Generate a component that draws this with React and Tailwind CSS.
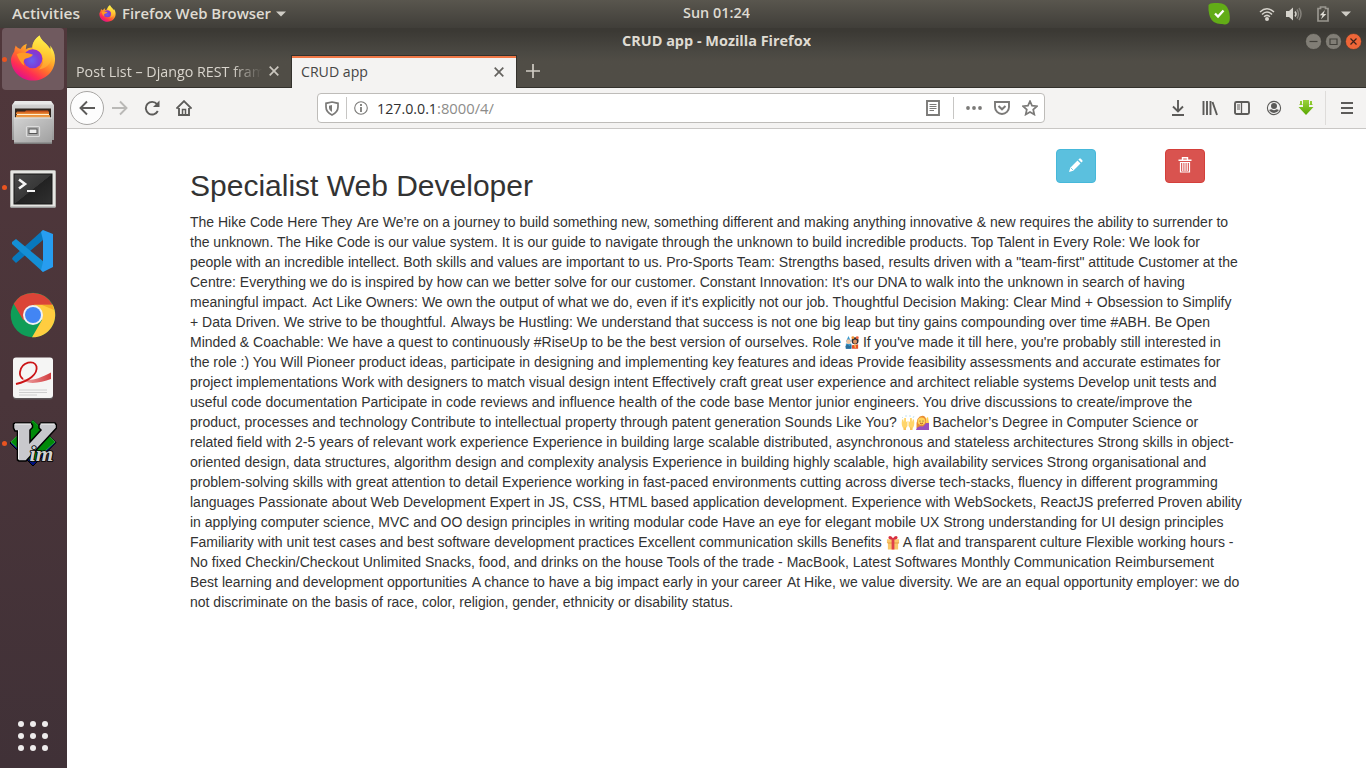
import React from "react";

function FirefoxLogo({ size, id }) {
  return (
    <svg width={size} height={size} viewBox="0 0 48 48" className="shrink-0">
      <defs>
        <linearGradient id={id + "a"} x1="0.8" y1="0.1" x2="0.25" y2="0.95">
          <stop offset="0.05" stopColor="#fff44f" />
          <stop offset="0.35" stopColor="#ffae2a" />
          <stop offset="0.6" stopColor="#ff6a2e" />
          <stop offset="0.8" stopColor="#ff2f52" />
          <stop offset="1" stopColor="#e0128a" />
        </linearGradient>
        <radialGradient id={id + "b"} cx="0.45" cy="0.6" r="0.6">
          <stop offset="0" stopColor="#6a60f0" />
          <stop offset="0.6" stopColor="#7a3fd8" />
          <stop offset="1" stopColor="#9530c8" />
        </radialGradient>
        <linearGradient id={id + "c"} x1="0.7" y1="0" x2="0.6" y2="1">
          <stop offset="0" stopColor="#fff44f" />
          <stop offset="0.5" stopColor="#ffcf35" />
          <stop offset="1" stopColor="#ff9a30" />
        </linearGradient>
      </defs>
      <path d="M6 11C5 13 4.600 15 4.500 17C2 21 1 24 1 26C1.500 38 11.500 47.500 24 47.500C37 47.500 47 38 47 25C47 19 45 15 42 11C42.500 13 42 15 42 15C39 9 32 6 31 0.500C26 4 23.500 8 23 13C20 13 18 14 16.500 15C16.500 13 17 11 17.500 9C14.500 10 12.500 12 11 14.500C9 14 7 13 6 11Z" fill={"url(#" + id + "a)"} />
      <path d="M31 0.500C26 4 22.500 9 24 15C30 15 34 19 34.500 25C35 30 33 33 30 36C37 35 42 31 43 25C43.500 20 42.500 16 42 15C39 9 32 6 31 0.500Z" fill={"url(#" + id + "c)"} />
      <circle cx="23.800" cy="24.800" r="10" fill={"url(#" + id + "b)"} />
      <path d="M7 20C12 17.500 19 18.500 24 20.500C22.500 23 19 23.500 16.500 24.500C13.500 26 14 29 15 32C11 29 9 25 7 20Z" fill="#ff9a25" />
    </svg>
  );
}

function FilesLogo() {
  return (
    <svg width="44" height="46" viewBox="0 0 44 46" className="-translate-y-px">
      <defs>
        <linearGradient id="cab" x1="0" y1="0" x2="0" y2="1">
          <stop offset="0" stopColor="#d8d8d8" />
          <stop offset="1" stopColor="#969696" />
        </linearGradient>
        <linearGradient id="drawer" x1="0" y1="0" x2="1" y2="1">
          <stop offset="0" stopColor="#d2d2d2" />
          <stop offset="1" stopColor="#a0a0a0" />
        </linearGradient>
      </defs>
      <path d="M4 2H40L43 6V41H1V6Z" fill="url(#cab)" />
      <path d="M4 2H40L42 5.500H2Z" fill="#e8e8e8" />
      <rect x="4" y="9.500" width="36" height="9.500" fill="#302620" />
      <path d="M6 12.500H14L15 11.500H37L38 13V19H5Z" fill="#c9561c" />
      <path d="M5 13.500H38V15H5Z" fill="#e98634" />
      <path d="M6 15H38V16.200H6Z" fill="#fff0d0" />
      <path d="M5 16.200H39V19H5Z" fill="#ef9a42" />
      <path d="M3 18.500H41V44H3Z" fill="url(#drawer)" />
      <path d="M3 18.500H41V19.500H3Z" fill="#e4e4e4" />
      <path d="M3 43.500H41V45H3Z" fill="#7c7c7c" />
      <rect x="15.500" y="27.500" width="13" height="10" rx="1" fill="#a8a8a8" stroke="#dcdcdc" strokeWidth="1.200" />
      <rect x="18" y="30" width="8" height="4.500" fill="#eee" stroke="#555" />
    </svg>
  );
}

function TerminalLogo() {
  return (
    <svg width="46" height="39" viewBox="0 0 46 39" className="translate-y-[2px]">
      <defs>
        <linearGradient id="scr" x1="0" y1="0" x2="1" y2="1">
          <stop offset="0" stopColor="#4a4a4a" />
          <stop offset="0.5" stopColor="#383838" />
          <stop offset="0.51" stopColor="#222" />
          <stop offset="1" stopColor="#303030" />
        </linearGradient>
      </defs>
      <rect x="0.500" y="0.500" width="45" height="37" rx="1" fill="#e6e6e3" stroke="#b4b4b0" />
      <path d="M1 36.500H45V38H1Z" fill="#999" />
      <rect x="4" y="4" width="38" height="30" fill="url(#scr)" stroke="#161616" />
      <path d="M9 9.500L15 14L9 18.500" fill="none" stroke="#f4f4f4" strokeWidth="2.600" />
      <path d="M17 21H25" stroke="#f4f4f4" strokeWidth="2" />
    </svg>
  );
}

function CodeLogo() {
  return (
    <svg width="44" height="44" viewBox="0 0 44 44">
      <path d="M1 30L5 34L32 11V1L2 28Z" fill="#0878bd" />
      <path d="M1 13L5 10L33 33L32 43L1 15Z" fill="#148fd4" />
      <path d="M32 1L42 5V38L32 43L30 41L32 33V11L30 3Z" fill="#279df0" />
    </svg>
  );
}

function ChromeLogo() {
  return (
    <svg width="46" height="46" viewBox="0 0 46 46">
      <circle cx="23" cy="23" r="22.300" fill="#0f9d58" />
      <path d="M3.700 11.800A22.300 22.300 0 0 1 42.700 13H23L13.400 28.500Z" fill="#db4437" />
      <path d="M42.700 12.800A22.300 22.300 0 0 1 22 45.300L32 28L24 12.800Z" fill="#ffcd40" />
      <path d="M32 13H42.700L44 18Z" fill="#f1ad25" />
      <circle cx="23" cy="23" r="10" fill="#f1f1f1" />
      <circle cx="23" cy="23" r="8" fill="#4285f4" />
    </svg>
  );
}

function EvinceLogo() {
  return (
    <svg width="42" height="43" viewBox="0 0 42 43" className="-translate-y-px">
      <defs>
        <linearGradient id="tail" x1="0" y1="0" x2="1" y2="0">
          <stop offset="0" stopColor="#f3b5b5" />
          <stop offset="1" stopColor="#d23c3e" />
        </linearGradient>
      </defs>
      <rect x="1" y="2" width="40" height="40.500" rx="3" fill="#5c5658" />
      <rect x="1" y="0.500" width="40" height="40.500" rx="3" fill="#f5f5f4" />
      <path d="M8 14C6 24 18 27 39 15.500V22C25 27.500 6 29 8 14Z" fill="url(#tail)" />
      <path d="M4 27C17 24 26 17 24.500 9.500C22.500 2 9.500 5 8 15C7.500 18 9 20.500 11 22" fill="none" stroke="#cb1416" strokeWidth="1.800" />
      <path d="M7 33H35M7 35.500H35M7 38H25" stroke="#cecece" strokeWidth="1" />
    </svg>
  );
}

function VimLogo() {
  return (
    <svg width="48" height="48" viewBox="0 0 48 48">
      <path d="M24 1L47 23.500L24 47L1 24Z" fill="#001080" stroke="#000" />
      <path d="M24 1.500L46 23L24 43L2 23Z" fill="#008a08" stroke="#36b53d" strokeWidth="0.800" />
      <path d="M6 4H22L23.500 6V8.500L21 11V23L32 11L30 9V6L32 4H46L47.500 6V9L17 42H10L8.500 41V12H6L4.500 9V5Z" fill="#c8c8cc" stroke="#000" strokeWidth="1.500" />
      <path d="M6 5H22M9.500 11V40M31.500 5H45.500" fill="none" stroke="#f3f3f3" />
      <text x="20.500" y="42" fontFamily="Liberation Serif, serif" fontSize="20" fontStyle="italic" fontWeight="bold" textLength="24" lengthAdjust="spacingAndGlyphs" fill="#d2d2d2" stroke="#000" strokeWidth="1.600" paintOrder="stroke">im</text>
    </svg>
  );
}

function Dock() {
  return (
    <aside className="flex w-[67px] shrink-0 flex-col justify-between bg-linear-to-b from-[#50373b] via-[#4a353a] to-[#403137]">
      <div className="flex flex-col gap-[2px]">
        <DockItem running active><span className="-translate-y-px"><FirefoxLogo size={46} id="fd" /></span></DockItem>
        <DockItem><FilesLogo /></DockItem>
        <DockItem running><TerminalLogo /></DockItem>
        <DockItem><CodeLogo /></DockItem>
        <DockItem><ChromeLogo /></DockItem>
        <DockItem><EvinceLogo /></DockItem>
        <DockItem running><VimLogo /></DockItem>
      </div>
      <div className="grid grid-cols-3 gap-[6px] pb-[17px] pl-[18px] pr-[19px]">
        {[0, 1, 2, 3, 4, 5, 6, 7, 8].map((i) => (
          <i key={i} className="size-[6px] rounded-full bg-[#eeecec]" />
        ))}
      </div>
    </aside>
  );
}

function DockItem({ running, active, children }) {
  return (
    <div className={"ml-[2px] flex h-[62px] w-[62px] items-center rounded " + (active ? "bg-[#705a5f]" : "")}>
      <i className={"size-[5px] shrink-0 rounded-full " + (running ? "bg-[#e95420]" : "")} />
      <span className="flex w-[52px] shrink-0 justify-center">{children}</span>
    </div>
  );
}

function Label({ width, size = 14, children, className = "", weight = 400, fill }) {
  return (
    <svg width={width} height="22" viewBox={"0 0 " + width + " 22"} className={"shrink-0 " + className}>
      <text x="0" y="16" fontFamily="Open Sans, Noto Sans, sans-serif" fontSize={size} fontWeight={weight} textLength={width} lengthAdjust="spacingAndGlyphs" fill={fill}>{children}</text>
    </svg>
  );
}

function TopBar() {
  return (
    <header className="flex h-7 shrink-0 items-center bg-linear-to-b from-[#59564e] to-[#403e39] pl-3">
      <Label width={68} size={13.5} weight={600} fill="#dfdbd2" className="-mt-[1px]">Activities</Label>
      <span className="ml-[19px] flex w-[19px] -translate-y-px"><FirefoxLogo size={17} id="ft" /></span>
      <Label width={149} size={13.5} weight={600} fill="#dfdbd2" className="ml-[4px] -mt-[1px]">Firefox Web Browser</Label>
      <svg width="10" height="6" className="ml-[5px] shrink-0"><path d="M0 0.500H10L5 5.500Z" fill="#cfccc5" /></svg>
      <Label width={67} size={13.5} weight={600} fill="#dfdbd2" className="ml-[397px] -mt-[2px]">Sun 01:24</Label>
      <svg width="22" height="23" viewBox="0 0 22 23" className="-mt-[2px] ml-[458px] shrink-0">
        <path d="M0.500 3Q2 0.500 8 1Q18 0 20.500 8Q22.500 13 21.500 19Q20 23.500 14 22Q5 22.500 2 15Q1 12 0.500 8Z" fill="#62ac17" />
        <path d="M7 11.500L10 14.500L15.500 8.500" fill="none" stroke="#fff" strokeWidth="2.300" />
      </svg>
      <svg width="16" height="14" viewBox="0 0 16 14" className="ml-[29px] -mt-[1px] shrink-0">
        <path d="M1 5Q8 -1.500 15 5M3 7.500Q8 2.500 13 7.500M5 9.800Q8 7 11 9.800" fill="none" stroke="#d6d3cc" strokeWidth="1.500" />
        <circle cx="8" cy="12" r="2" fill="#d6d3cc" />
      </svg>
      <svg width="16" height="14" viewBox="0 0 16 14" className="ml-[11px] -mt-[1px] shrink-0">
        <path d="M0 4H3L7 0.500V13.500L3 10H0Z" fill="#d6d3cc" />
        <path d="M9 4.500Q11 7 9 9.500" fill="none" stroke="#d6d3cc" strokeWidth="1.500" />
        <path d="M11 2.500Q14 7 11 11.500M13 1Q17 7 13 13" fill="none" stroke="#85827b" strokeWidth="1.500" />
      </svg>
      <svg width="12" height="16" viewBox="0 0 12 16" className="ml-[15px] -mt-[1px] shrink-0">
        <path d="M1 2.500H3.500V1H8.500V2.500H11V15H1Z" fill="none" stroke="#99968f" strokeWidth="1.700" />
        <path d="M8 4L2.800 9.300H5.500L4 13.300L9.300 8H6.500Z" fill="#e2dfd8" />
      </svg>
      <svg width="10" height="6" className="ml-[12px] shrink-0"><path d="M0 0.500H10L5 5.500Z" fill="#cfccc5" /></svg>
    </header>
  );
}

function WindowButton({ close, children }) {
  return (
    <svg width="17" height="17" viewBox="0 0 17 17">
      <circle cx="8.500" cy="8.500" r="8" fill={close ? "#ef6638" : "#817e76"} stroke="#383631" strokeWidth="0.600" />
      <g fill="none" stroke={close ? "#3d221b" : "#43413b"} strokeWidth="1.200">{children}</g>
    </svg>
  );
}

function TabClose({ stroke, className }) {
  return <svg width="10" height="10" viewBox="0 0 10 10" className={"shrink-0 " + className}><path d="M0.700 0.700L9.300 9.300M9.300 0.700L0.700 9.300" stroke={stroke} strokeWidth="1.700" /></svg>;
}

function WindowChrome() {
  return (
    <div className="h-[60px] shrink-0 bg-linear-to-b from-[#3b3934] from-5% via-[#4a4842] via-40% to-[#504d46] to-55%">
      <div className="flex h-[27px] items-center">
        <Label width={189} size={13.5} weight={700} fill="#dfdbd2" className="ml-[555px] -mt-[1px]">CRUD app - Mozilla Firefox</Label>
        <div className="ml-[493.5px] flex gap-[3px] -mt-[1px]">
          <WindowButton><path d="M4.500 8.500H12.500" /></WindowButton>
          <WindowButton><path d="M5 6H12V11.500H5Z" /></WindowButton>
          <WindowButton close><path d="M5.500 5.500L11.500 11.500M11.500 5.500L5.500 11.500" /></WindowButton>
        </div>
      </div>
      <div className="flex h-[33px]">
        <div className="flex w-[224px] items-center border-b border-[#33312c] pl-[9px]">
          <div className="w-[190px] pt-[2px] mask-r-from-82% mask-r-to-98%">
            <Label width={189} size={14} fill="#d9d5cd">Post List – Django REST fram</Label>
          </div>
          <TabClose stroke="#cbc7bf" className="ml-[3px]" />
        </div>
        <div className="flex w-[226px] items-center border-x border-t border-[#33312c] bg-[#f4f3f2]">
          <div className="flex h-full w-full items-center border-t-2 border-[#f07746] pl-[9px]">
            <Label width={67} size={14} fill="#454545" className="-mt-[2px]">CRUD app</Label>
            <TabClose stroke="#65635f" className="ml-[126px] -mt-[3px]" />
          </div>
        </div>
        <div className="flex grow items-center border-b border-[#33312c] pl-[9px]">
          <svg width="14" height="14" viewBox="0 0 14 14"><path d="M7 0V14M0 7H14" stroke="#d0ccc4" strokeWidth="1.700" /></svg>
        </div>
      </div>
    </div>
  );
}

function Icon({ children, className = "", stroke = "#5c5b59" }) {
  return <svg width="16" height="16" viewBox="0 0 16 16" fill="none" stroke={stroke} strokeWidth="1.900" className={"shrink-0 " + className}>{children}</svg>;
}

function Toolbar() {
  return (
    <div className="flex h-[41px] shrink-0 items-center border-b border-[#c9c7c5] bg-[#f4f3f2] pl-[3px]">
      <span className="flex size-[34px] shrink-0 items-center justify-center rounded-full border border-[#a8a6a4] bg-[#fdfdfd]">
        <Icon><path d="M16 8H1.500M8 1.500L1.500 8L8 14.500" /></Icon>
      </span>
      <Icon className="ml-2" stroke="#bab9b7"><path d="M0 8H14.500M8 1.500L14.500 8L8 14.500" /></Icon>
      <Icon className="ml-4"><path d="M13.800 11A6.300 6.300 0 1 1 13 4.200" /><path d="M15.500 0.500V7H9Z" fill="#5c5b59" stroke="none" /></Icon>
      <Icon className="ml-4"><path d="M0.500 8.700L8 1.200L15.500 8.700M3 8V15H13V8" /><path d="M6.500 15V9.500H9.500V15" strokeWidth="1.500" /></Icon>
      <div className="ml-[125px] flex h-[30px] w-[728px] shrink-0 items-center rounded-[4px] border border-[#bebcb9] bg-white">
        <svg width="14" height="15" viewBox="0 0 14 15" className="ml-[7px] shrink-0" fill="none" stroke="#7b7a78">
          <path d="M7 1L13 2.300V6Q13 11 7 14Q1 11 1 6V2.300Z" strokeWidth="1.700" />
          <path d="M7 4L4 4.800V7Q4 9.500 7 11Z" fill="#7b7a78" stroke="none" />
        </svg>
        <i className="ml-[7px] h-[22px] w-px bg-[#c7c6c4]" />
        <svg width="14" height="14" viewBox="0 0 14 14" className="ml-[7px] shrink-0">
          <circle cx="7" cy="7" r="6.300" fill="none" stroke="#7b7a78" strokeWidth="1.100" /><path d="M7 3V5M7 6V11" stroke="#7b7a78" strokeWidth="1.800" />
        </svg>
        <Label width={60} size={14} fill="#303030" className="ml-[9px] mt-px">127.0.0.1</Label>
        <Label width={57} size={14} fill="#8d8c8a" className="mt-px">:8000/4/</Label>
        <Icon className="ml-[431px]" stroke="#7b7a78"><path d="M2 1H14V15H2Z" /><path d="M4.500 4.500H11.500M4.500 6.500H11.500M4.500 8.500H11.500M4.500 10.500H9" strokeWidth="1" /></Icon>
        <i className="ml-[12px] h-[22px] w-px bg-[#c7c6c4]" />
        <Icon className="ml-[12px]" stroke="#7b7a78"><g fill="#7b7a78" stroke="none"><circle cx="2" cy="8" r="1.900" /><circle cx="8" cy="8" r="1.900" /><circle cx="14" cy="8" r="1.900" /></g></Icon>
        <Icon className="ml-[12px]" stroke="#7b7a78"><path d="M1 2H15V7A7 7 0 0 1 1 7Z" /><path d="M4.500 6L8 9.300L11.500 6" strokeWidth="2" /></Icon>
        <Icon className="ml-[12px]" stroke="#7b7a78"><path d="M8 1.200L10 5.700L15 6.200L11.200 9.500L12.300 14.500L8 12L3.700 14.500L4.800 9.500L1 6.200L6 5.700Z" strokeWidth="1.700" /></Icon>
      </div>
      <Icon className="ml-[125px]"><path d="M8 0V11M3 6.500L8 11.500L13 6.500M2 15H14" /></Icon>
      <Icon className="ml-4"><path d="M1.500 1V15M5 1V15M8.500 1V15M10.500 2L15 15" /></Icon>
      <Icon className="ml-4"><rect x="1" y="2" width="14" height="12" rx="1.500" /><path d="M7.500 2V14" strokeWidth="1.300" /><path d="M3 5H6M3 7H6M3 9H6" strokeWidth="1" /></Icon>
      <Icon className="ml-4"><circle cx="8" cy="8" r="6.600" strokeWidth="1.100" /><circle cx="8" cy="6" r="3" fill="#5c5b59" stroke="none" /><path d="M3 10Q5 9 6 9.500Q8 11 10 9.500Q11 9 13 10Q11 13 8 13Q5 13 3 10Z" fill="#5c5b59" stroke="none" /></Icon>
      <svg width="16" height="16" viewBox="0 0 16 16" className="ml-4 shrink-0">
        <defs><linearGradient id="dl" x1="0" y1="0" x2="0" y2="1"><stop stopColor="#9cd23c" /><stop offset="1" stopColor="#58a700" /></linearGradient></defs>
        <path d="M5 0H11V7H15.500L8 15L0.500 7H5ZM2 1L4 1V4L5 5H1L2 4ZM12 1H14V4L15 5H11L12 4Z" fill="url(#dl)" />
      </svg>
      <i className="ml-[11px] h-[34px] w-px shrink-0 bg-[#dedcda]" />
      <Icon className="ml-[13px]"><path d="M2 3H14M2 8H14M2 13H14" /></Icon>
    </div>
  );
}

function Performers() {
  return (
    <svg width="14" height="15" viewBox="0 0 16 16" className="inline-block align-[-3px]">
      <path d="M1 7L4 0.500L7 7ZM1 9H7V15H1Z" fill="#3a9bd0" />
      <circle cx="4" cy="7" r="2.600" fill="#f0c4a0" /><path d="M0.500 12L3 10L5 12L7.500 10V15H1Z" fill="#2b6f9a" />
      <circle cx="11.500" cy="6" r="4" fill="#2c3038" /><circle cx="11.500" cy="7" r="2.300" fill="#df9362" />
      <path d="M8 11L15 10V15H8Z" fill="#e2512b" /><circle cx="9" cy="2.500" r="1.700" fill="#f09235" /><circle cx="14" cy="2.500" r="1.700" fill="#ed613a" />
      <path d="M11 10L12 14" stroke="#ffc34f" strokeWidth="1.500" />
    </svg>
  );
}

function Hands() {
  return (
    <svg width="14" height="15" viewBox="0 0 14 15" className="inline-block align-[-3px]">
      <path d="M1 5L2 4L3 7L3.200 3L5 3V7L6.500 6V11Q5 14 2.500 13.500Q0 11 1 5Z M13 5L12 4L11 7L10.800 3L9 3V7L7.500 6V11Q9 14 11.500 13.500Q14 11 13 5Z" fill="#ffd56a" />
      <path d="M2.500 13V15H5V12M11.500 13V15H9V12" fill="#f8c45a" /><path d="M1 2L2 3M5 0V2M9 0V2M13 1L12 3" stroke="#c4e2f0" />
    </svg>
  );
}

function Woman() {
  return (
    <svg width="14" height="15" viewBox="0 0 14 15" className="inline-block align-[-3px]">
      <path d="M1.500 13Q1 8 2.500 4Q5 0 9 1Q12 3 11.500 9L12 13Z" fill="#e98d31" />
      <circle cx="6.500" cy="6.300" r="3.800" fill="#ffd25a" /><path d="M1 15Q2 10.500 8 11.500L11 8H14V15Z" fill="#9850bd" />
      <path d="M11.500 3L13 2L14 8H11Z" fill="#ffcc4d" /><circle cx="5" cy="6" r="0.600" fill="#664a34" /><circle cx="8" cy="6" r="0.600" fill="#664a34" /><path d="M5 8Q6.500 9.500 8 8" stroke="#ad5029" fill="none" />
    </svg>
  );
}

function Gift() {
  return (
    <svg width="14" height="15" viewBox="0 0 15 15" className="inline-block align-[-3px]">
      <path d="M1 4H14V8H13V15H2V8H1Z" fill="#f9c86a" /><path d="M1 7.500H14V8.500H2Z" fill="#e59a45" />
      <path d="M6 4H9V15H6Z" fill="#e0404b" /><path d="M7.500 4.500Q1 4 3 1Q5 -0.500 7.500 3Q10 -0.500 12 1Q14 4 7.500 4.500Z" fill="#d8303f" />
    </svg>
  );
}

const lines = [
  "The Hike Code Here They Are We’re on a journey to build something new, something different and making anything innovative & new requires the ability to surrender to",
  "the unknown. The Hike Code is our value system. It is our guide to navigate through the unknown to build incredible products. Top Talent in Every Role: We look for",
  "people with an incredible intellect. Both skills and values are important to us. Pro-Sports Team: Strengths based, results driven with a \"team-first\" attitude Customer at the",
  "Centre: Everything we do is inspired by how can we better solve for our customer. Constant Innovation: It's our DNA to walk into the unknown in search of having",
  "meaningful impact. Act Like Owners: We own the output of what we do, even if it's explicitly not our job. Thoughtful Decision Making: Clear Mind + Obsession to Simplify",
  "+ Data Driven. We strive to be thoughtful. Always be Hustling: We understand that success is not one big leap but tiny gains compounding over time #ABH. Be Open",
  <>Minded & Coachable: We have a quest to continuously #RiseUp to be the best version of ourselves. Role <Performers /> If you've made it till here, you're probably still interested in</>,
  "the role :) You Will Pioneer product ideas, participate in designing and implementing key features and ideas Provide feasibility assessments and accurate estimates for",
  "project implementations Work with designers to match visual design intent Effectively craft great user experience and architect reliable systems Develop unit tests and",
  "useful code documentation Participate in code reviews and influence health of the code base Mentor junior engineers. You drive discussions to create/improve the",
  <>product, processes and technology Contribute to intellectual property through patent generation Sounds Like You? <Hands /><Woman /> Bachelor’s Degree in Computer Science or</>,
  "related field with 2-5 years of relevant work experience Experience in building large scalable distributed, asynchronous and stateless architectures Strong skills in object-",
  "oriented design, data structures, algorithm design and complexity analysis Experience in building highly scalable, high availability services Strong organisational and",
  "problem-solving skills with great attention to detail Experience working in fast-paced environments cutting across diverse tech-stacks, fluency in different programming",
  "languages Passionate about Web Development Expert in JS, CSS, HTML based application development. Experience with WebSockets, ReactJS preferred Proven ability",
  "in applying computer science, MVC and OO design principles in writing modular code Have an eye for elegant mobile UX Strong understanding for UI design principles",
  <>Familiarity with unit test cases and best software development practices Excellent communication skills Benefits <Gift /> A flat and transparent culture Flexible working hours -</>,
  "No fixed Checkin/Checkout Unlimited Snacks, food, and drinks on the house Tools of the trade - MacBook, Latest Softwares Monthly Communication Reimbursement",
  "Best learning and development opportunities A chance to have a big impact early in your career At Hike, we value diversity. We are an equal opportunity employer: we do",
  "not discriminate on the basis of race, color, religion, gender, ethnicity or disability status.",
];

// Cancels the kerning between a space and a following capital A.
function spaced(line) {
  if (typeof line !== "string") return line;
  return line.split(/(?<= )(?=A)/).map((part, i) => (
    <span key={i} className={i > 0 ? "ml-[0.77px]" : ""}>{part}</span>
  ));
}

function Page() {
  return (
    <main className="flex grow items-start bg-white pl-[123px] pt-5 font-['Liberation_Sans',Arial,sans-serif] text-[#333]">
      <article className="w-[866px] shrink-0 pt-5">
        <h1 className="mb-[10px] text-[30px] leading-[33px] font-normal">Specialist Web Developer</h1>
        <div className="text-[14px] leading-5 whitespace-nowrap">
          {lines.map((line, i) => <p key={i} className="h-5">{spaced(line)}</p>)}
        </div>
      </article>
      <button className="flex h-[34px] w-10 shrink-0 items-center justify-center rounded-[4px] border border-[#46b8da] bg-[#5bc0de]">
        <svg width="14" height="14" viewBox="0 0 14 14" fill="#fff" className="-mt-[2px]"><path d="M0 14L1.300 9.800L8.500 2.500L11.500 5.500L4.200 12.700ZM9.400 1.600L10.600 0.500H11.600L13.500 2.400V3.400L12.400 4.600Z" /><path d="M2 10L4 12" stroke="#5bc0de" strokeWidth="0.800" /></svg>
      </button>
      <button className="ml-[69px] flex h-[34px] w-10 shrink-0 items-center justify-center rounded-[4px] border border-[#d43f3a] bg-[#d9534f]">
        <svg width="14" height="16" viewBox="0 0 14 16" fill="none" stroke="#fff" className="-mt-[2px]"><path d="M4.500 2.500V0.800H9.500V2.500M0.500 3.200H13.500" strokeWidth="1.400" /><path d="M2.500 5V15H11.500V5M4.800 5V14M7 5V14M9.200 5V14M2 5.500H12" strokeWidth="1.200" /></svg>
      </button>
    </main>
  );
}

export default function App() {
  return (
    <div className="flex h-screen w-screen flex-col overflow-hidden">
      <TopBar />
      <div className="flex min-h-0 grow">
        <Dock />
        <section className="flex min-w-0 grow flex-col">
          <WindowChrome />
          <Toolbar />
          <Page />
        </section>
      </div>
    </div>
  );
}
